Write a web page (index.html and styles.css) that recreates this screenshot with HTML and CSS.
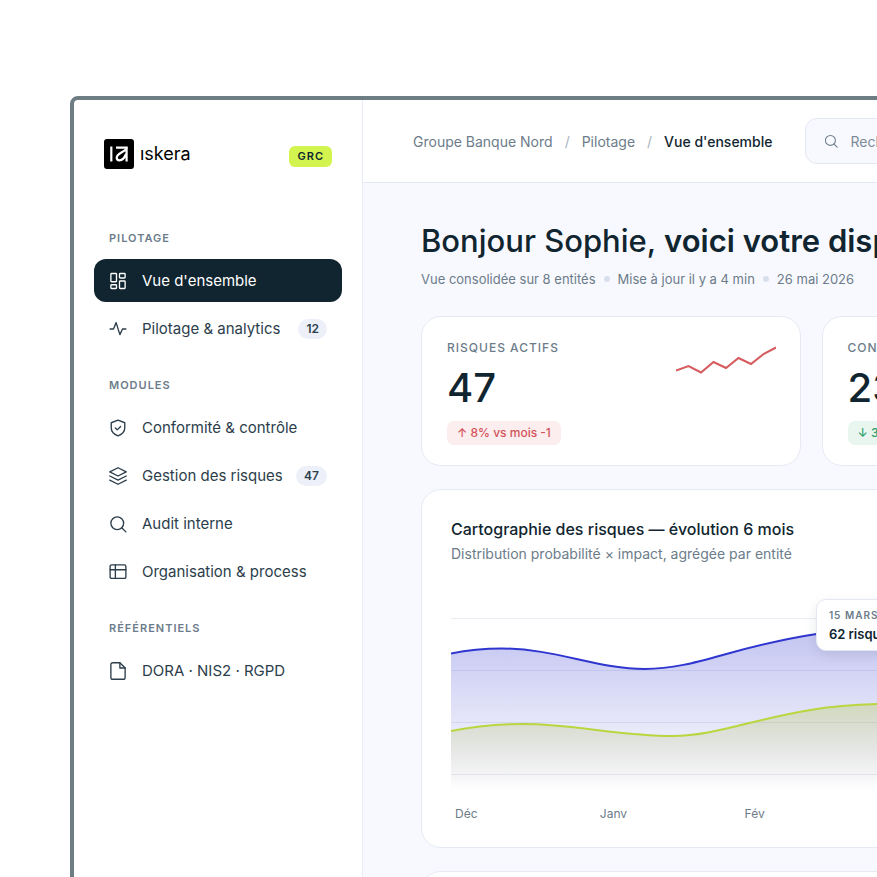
FILE: index.html
```html
<!DOCTYPE html>
<html lang="fr">
<head>
  <meta charset="UTF-8">
  <meta name="viewport" content="width=device-width, initial-scale=1.0">
  <title>Iskera GRC - Vue d'ensemble</title>
  <link rel="stylesheet" href="styles.css">
</head>
<body>
  <div class="window">
    <aside class="sidebar">
      <div class="brand">
        <a class="logo" href="#">
          <svg class="logo-mark" viewBox="0 0 30 30" aria-hidden="true">
            <rect width="30" height="30" rx="3" fill="#000"/>
            <path d="M7.300 7.500v15M12 8.700h11.800M22.600 7.500v15M21.800 10.500C18 14 12.700 14.500 12.700 18.800c0 2 1.300 2.500 2.800 2.500 3 0 5-2.500 6.500-6.300" fill="none" stroke="#fff" stroke-width="2.200"/>
          </svg>
          <span class="logo-text">ıskera</span>
        </a>
        <span class="tag">GRC</span>
      </div>

      <nav class="nav">
        <h2 class="nav-title">PILOTAGE</h2>
        <a class="nav-item active" href="#">
          <svg class="icon" viewBox="0 0 24 24"><rect x="2.500" y="2" width="7.500" height="11" rx="1"/><rect x="14" y="2" width="7.500" height="6" rx="1"/><rect x="14" y="12" width="7.500" height="10" rx="1"/><rect x="2.500" y="17" width="7.500" height="5" rx="1"/></svg>
          <span>Vue d'ensemble</span>
        </a>
        <a class="nav-item" href="#">
          <svg class="icon" viewBox="0 0 24 24"><path d="M1.500 12H6l3.500-8.500 5 16L18 12h4.500"/></svg>
          <span>Pilotage &amp; analytics</span>
          <span class="count">12</span>
        </a>

        <h2 class="nav-title">MODULES</h2>
        <a class="nav-item" href="#">
          <svg class="icon" viewBox="0 0 24 24"><path d="M12 1.500l9 3.500v7c0 5-4 8.500-9 10.500-5-2-9-5.500-9-10.500V5z"/><path d="M8.500 12l2.500 2.500 4.500-4.500"/></svg>
          <span>Conformité &amp; contrôle</span>
        </a>
        <a class="nav-item" href="#">
          <svg class="icon" viewBox="0 0 24 24"><path d="M12 1L1 6.500 12 12 23 6.500z"/><path d="M1 12l11 5.500L23 12"/><path d="M1 17.500L12 23l11-5.500"/></svg>
          <span>Gestion des risques</span>
          <span class="count">47</span>
        </a>
        <a class="nav-item" href="#">
          <svg class="icon" viewBox="0 0 24 24"><circle cx="11" cy="11" r="8.500"/><path d="M17.200 17.200L22.500 22.500"/></svg>
          <span>Audit interne</span>
        </a>
        <a class="nav-item" href="#">
          <svg class="icon" viewBox="0 0 24 24"><rect x="1.500" y="2.500" width="21" height="18" rx="2"/><path d="M1.500 9h21M8.500 2.500v18"/></svg>
          <span>Organisation &amp; process</span>
        </a>

        <h2 class="nav-title">RÉFÉRENTIELS</h2>
        <a class="nav-item" href="#">
          <svg class="icon" viewBox="0 0 24 24"><path d="M14.500 1H5a2.500 2.500 0 0 0-2.500 2.500v17A2.500 2.500 0 0 0 5 23h14a2.500 2.500 0 0 0 2.500-2.500V8z"/><path d="M14.500 1v7h7"/></svg>
          <span>DORA · NIS2 · RGPD</span>
        </a>
      </nav>
    </aside>

    <div class="content">
      <header class="topbar">
        <nav class="breadcrumb" aria-label="Fil d'Ariane">
          <a href="#">Groupe Banque Nord</a>
          <span class="sep">/</span>
          <a href="#">Pilotage</a>
          <span class="sep">/</span>
          <a class="current" href="#">Vue d'ensemble</a>
        </nav>
        <label class="search">
          <svg class="icon" viewBox="0 0 24 24"><circle cx="11" cy="11" r="8.500"/><path d="M17.200 17.200L22.500 22.500"/></svg>
          <input type="search" placeholder="Rechercher" aria-label="Rechercher">
        </label>
      </header>

      <main class="main">
        <h1>Bonjour Sophie, <strong>voici votre dispositif</strong></h1>
        <div class="meta">
          <span>Vue consolidée sur 8 entités</span>
          <i class="dot"></i>
          <span>Mise à jour il y a 4 min</span>
          <i class="dot"></i>
          <span>26 mai 2026</span>
        </div>

        <section class="kpis">
          <article class="card kpi">
            <div>
              <h3 class="kpi-label">RISQUES ACTIFS</h3>
              <div class="kpi-value">47</div>
              <span class="delta up">↑ 8% vs mois -1</span>
            </div>
            <svg class="sparkline" viewBox="0 0 100 30" aria-hidden="true">
              <path d="M0 25.500L12.500 21 25 27.500 37.500 17 50 23 62.500 13 75 19 87.500 9 100 2.500"/>
            </svg>
          </article>
          <article class="card kpi">
            <div>
              <h3 class="kpi-label">CONTRÔLES</h3>
              <div class="kpi-value">23</div>
              <span class="delta down">↓ 3 vs mois -1</span>
            </div>
          </article>
        </section>

        <section class="panels">
          <article class="card panel">
            <h2 class="panel-title">Cartographie des risques — évolution 6 mois</h2>
            <p class="panel-subtitle">Distribution probabilité × impact, agrégée par entité</p>
            <div class="chart">
              <svg class="chart-plot" viewBox="0 0 870 190" preserveAspectRatio="none" aria-hidden="true">
                <defs>
                  <linearGradient id="fill-risk" x1="0" y1="0" x2="0" y2="1">
                    <stop offset="0" stop-color="#2f35cf" stop-opacity="0.300"/>
                    <stop offset="1" stop-color="#2f35cf" stop-opacity="0"/>
                  </linearGradient>
                  <linearGradient id="fill-control" x1="0" y1="0" x2="0" y2="1">
                    <stop offset="0" stop-color="#b9d03c" stop-opacity="0.350"/>
                    <stop offset="1" stop-color="#a09a80" stop-opacity="0"/>
                  </linearGradient>
                </defs>
                <path class="gridline" d="M0 18.500H870M0 70.500H870M0 122.500H870M0 174.500H870"/>
                <path fill="url(#fill-risk)" d="M0 53.500C17 50 34 48.500 51 48.500C104 48.500 147 69 194 69C245 69 280 47 366 34C450 21 520 40 600 46S780 20 870 24V190H0z"/>
                <path class="line-risk" d="M0 53.500C17 50 34 48.500 51 48.500C104 48.500 147 69 194 69C245 69 280 47 366 34C450 21 520 40 600 46S780 20 870 24"/>
                <path fill="url(#fill-control)" d="M0 131C24 126 48 124 72 124C122 124 170 136 222 136C280 136 330 104 436 104S650 120 870 96V190H0z"/>
                <path class="line-control" d="M0 131C24 126 48 124 72 124C122 124 170 136 222 136C280 136 330 104 436 104S650 120 870 96"/>
              </svg>
              <div class="tooltip">
                <span class="tooltip-date">15 MARS</span>
                <strong class="tooltip-value">62 risques</strong>
              </div>
            </div>
            <div class="months">
              <span>Déc</span>
              <span>Janv</span>
              <span>Fév</span>
              <span>Mars</span>
              <span>Avr</span>
              <span>Mai</span>
            </div>
          </article>
        </section>

        <section class="card next"></section>
      </main>
    </div>
  </div>
</body>
</html>
```
FILE: styles.css
```css
* {
  box-sizing: border-box;
}

body {
  margin: 0;
  padding: 96px 0 0 70px;
  height: 100vh;
  overflow: hidden;
  background: #fff;
  color: #10252f;
  font-family: Inter, "Liberation Sans", sans-serif;
  font-size: 15px;
}

h1, h2, h3, p {
  margin: 0;
}

a {
  color: inherit;
  text-decoration: none;
}

/* the dashboard bleeds off the right and bottom edges */
.window {
  display: flex;
  min-width: 1994px;
  min-height: 100vh;
  border: 4px solid #6e7d84;
  border-radius: 8px;
  background: #fff;
}

.icon {
  flex: none;
  width: 18px;
  height: 18px;
  fill: none;
  stroke: currentColor;
  stroke-width: 1.8;
  stroke-linecap: round;
  stroke-linejoin: round;
}

/* sidebar */
.sidebar {
  flex: none;
  width: 289px;
  padding: 39px 20px 0;
  border-right: 1px solid #e9ecf5;
}

.brand {
  display: flex;
  align-items: center;
  justify-content: space-between;
  padding: 0 10px;
}

.logo {
  display: flex;
  align-items: center;
  gap: 6px;
}

.logo-mark {
  width: 30px;
  height: 30px;
}

.logo-text {
  color: #000;
  font-size: 18px;
  line-height: 30px;
}

.tag {
  margin-top: 4px;
  padding: 0 8px;
  border-radius: 6px;
  background: #d3f34f;
  font-size: 11px;
  font-weight: 600;
  line-height: 21px;
  letter-spacing: 1px;
}

.nav {
  display: flex;
  flex-direction: column;
  gap: 5px;
  padding-top: 39px;
}

.nav-title {
  margin: 20px 0 6px;
  padding: 0 15px;
  color: #6c7c8a;
  font-size: 11px;
  font-weight: 600;
  line-height: 20px;
  letter-spacing: 1px;
}

.nav-item {
  display: flex;
  align-items: center;
  gap: 15px;
  height: 43px;
  padding: 0 15px;
  border-radius: 12px;
  color: #2c3e4b;
  white-space: nowrap;
}

.nav-item span {
  min-width: 0;
}

.nav-item.active {
  background: #10252f;
  color: #fff;
}

.nav-item .count {
  flex: none;
  margin-left: auto;
  padding: 0 8px;
  border-radius: 10px;
  background: #edf0f9;
  font-size: 12px;
  font-weight: 600;
  line-height: 20px;
}

/* top bar */
.content {
  flex: 1;
  min-width: 0;
  background: #f8f9fe;
}

.topbar {
  display: flex;
  align-items: center;
  gap: 33px;
  height: 83px;
  padding: 0 50px;
  border-bottom: 1px solid #e4e8f2;
  border-top-right-radius: 4px;
  background: #fff;
}

.breadcrumb {
  display: flex;
  gap: 12px;
  color: #6c7c8a;
  font-size: 14px;
}

.sep {
  color: #aab4c0;
}

.current {
  color: #10252f;
  font-weight: 500;
}

.search {
  display: flex;
  align-items: center;
  gap: 12px;
  width: 400px;
  height: 46px;
  padding: 0 18px;
  border: 1px solid #e4e8f2;
  border-radius: 12px;
  background: #f8f9fe;
  color: #6c7c8a;
}

.search .icon {
  width: 14px;
  height: 14px;
}

.search input {
  flex: 1;
  padding: 0;
  border: 0;
  outline: 0;
  background: none;
  font: inherit;
  font-size: 14px;
}

.search input::placeholder {
  color: #7d8b98;
}

/* page */
.main {
  padding: 36px 58px;
}

h1 {
  font-size: 31px;
  font-weight: 500;
  line-height: 44px;
}

h1 strong {
  font-weight: 600;
}

.meta {
  display: flex;
  align-items: center;
  gap: 8px;
  padding-top: 6px;
  color: #6c7c8a;
  font-size: 13px;
  line-height: 20px;
}

.dot {
  width: 6px;
  height: 6px;
  border-radius: 50%;
  background: #d8dfec;
}

.card {
  border: 1px solid #e6eaf3;
  border-radius: 20px;
  background: #fff;
}

.kpis {
  display: grid;
  grid-template-columns: repeat(4, 1fr);
  gap: 21px;
  margin-top: 27px;
}

.kpi {
  display: flex;
  justify-content: space-between;
  padding: 21px 24px 20px 25px;
}

.kpi-label {
  color: #6c7c8a;
  font-size: 12px;
  font-weight: 500;
  line-height: 20px;
  letter-spacing: 1px;
}

.kpi-value {
  padding-top: 4px;
  font-size: 40px;
  font-weight: 500;
  line-height: 52px;
}

.delta {
  display: inline-block;
  margin-top: 7px;
  padding: 0 10px;
  border-radius: 7px;
  font-size: 12px;
  font-weight: 500;
  line-height: 24px;
}

.delta.up {
  background: #fcedee;
  color: #d2545a;
}

.delta.down {
  background: #e8f6ef;
  color: #2f9e6c;
}

.sparkline {
  width: 100px;
  height: 30px;
  margin-top: 7px;
  fill: none;
  stroke: #d65a5e;
  stroke-width: 2;
}

.panels {
  display: grid;
  grid-template-columns: 930fr 632fr;
  gap: 21px;
  margin-top: 23px;
}

.panel {
  padding: 25px 29px 23px;
}

.panel-title {
  font-size: 16px;
  font-weight: 500;
  line-height: 28px;
}

.panel-subtitle {
  color: #6c7c8a;
  font-size: 14px;
  line-height: 22px;
}

.chart {
  position: relative;
  margin-top: 35px;
}

.chart-plot {
  display: block;
  width: 100%;
  height: 190px;
}

.gridline {
  fill: none;
  stroke: #e9ecf3;
}

.line-risk,
.line-control {
  fill: none;
  stroke-width: 2;
}

.line-risk {
  stroke: #2f35cf;
}

.line-control {
  stroke: #b9d63f;
}

.tooltip {
  position: absolute;
  top: -1px;
  left: 42%;
  display: flex;
  flex-direction: column;
  padding: 6px 12px;
  border: 1px solid #e4e8f2;
  border-radius: 10px;
  background: #fff;
  box-shadow: 0 4px 12px rgba(16, 37, 47, 0.1);
}

.tooltip-date {
  color: #6c7c8a;
  font-size: 10px;
  font-weight: 600;
  line-height: 18px;
  letter-spacing: 1px;
}

.tooltip-value {
  font-size: 13px;
  font-weight: 600;
  line-height: 20px;
}

.months {
  display: grid;
  grid-template-columns: repeat(6, 1fr);
  padding-top: 14px;
  color: #6c7c8a;
  font-size: 12px;
  line-height: 20px;
}

.months span {
  padding-left: 4px;
}

.next {
  height: 200px;
  margin-top: 23px;
}
```
